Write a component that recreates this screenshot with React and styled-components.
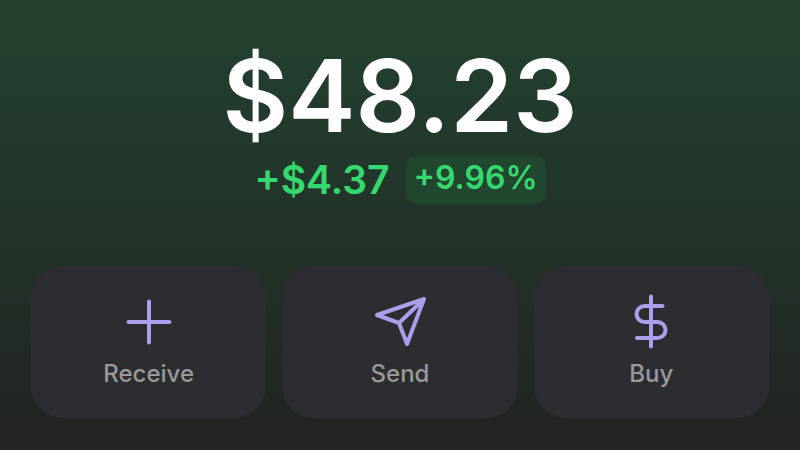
import React from 'react';
import styled, { createGlobalStyle } from 'styled-components';

const GlobalStyle = createGlobalStyle`
  * {
    box-sizing: border-box;
  }

  body {
    margin: 0;
    background: #222423;
    font-family: Inter, "Liberation Sans", sans-serif;
  }
`;

const Wallet = styled.main`
  min-height: 100vh;
  padding: 40px 31px 32px;
  background: linear-gradient(180deg, #23422f 0%, #22352a 45%, #222322 100%);
`;

const Summary = styled.section`
  display: flex;
  flex-direction: column;
  align-items: center;
`;

const Balance = styled.h1`
  margin: 0;
  color: #fff;
  font-size: 101px;
  font-weight: 600;
  line-height: 110px;
`;

const Change = styled.div`
  display: flex;
  align-items: center;
  gap: 16px;
  margin-top: 6px;
  color: #36d970;
`;

const Amount = styled.span`
  font-size: 39px;
  font-weight: 600;
  line-height: 48px;
`;

const Badge = styled.span`
  padding: 0 8px 4px;
  border-radius: 12px;
  background: #22472f;
  font-size: 32px;
  font-weight: 600;
  line-height: 44px;
`;

const Actions = styled.nav`
  display: grid;
  grid-template-columns: repeat(3, 1fr);
  gap: 16px;
  margin-top: 62px;
`;

const ActionButton = styled.button`
  display: flex;
  flex-direction: column;
  align-items: center;
  padding: 24px 16px 28px;
  border: 0;
  border-radius: 32px;
  background: #2c2d31;
  color: #999;
  font: 500 24px/32px Inter, "Liberation Sans", sans-serif;
  cursor: pointer;
`;

const Icon = styled.svg`
  width: 64px;
  height: 64px;
  margin-bottom: 4px;
  fill: none;
  stroke: #ab9fec;
  stroke-width: 4;
  stroke-linecap: round;
  stroke-linejoin: round;
`;

const actions = [
  { label: 'Receive', path: 'M32 11.5v41M11.5 32h41' },
  { label: 'Send', path: 'M56 9 9 25l22 8 8 21L56 9ZM31 33 56 9' },
  {
    label: 'Buy',
    path: 'M32 6.5v50M43.5 16H25.5a8 8 0 0 0 0 16h13a8 8 0 0 1 0 16H18',
  },
];

const App = () => (
  <>
    <GlobalStyle />
    <Wallet>
      <Summary>
        <Balance>$48.23</Balance>
        <Change>
          <Amount>+$4.37</Amount>
          <Badge>+9.96%</Badge>
        </Change>
      </Summary>
      <Actions>
        {actions.map(({ label, path }) => (
          <ActionButton key={label} type="button">
            <Icon viewBox="0 0 64 64" aria-hidden="true">
              <path d={path} />
            </Icon>
            {label}
          </ActionButton>
        ))}
      </Actions>
    </Wallet>
  </>
);

export default App;
